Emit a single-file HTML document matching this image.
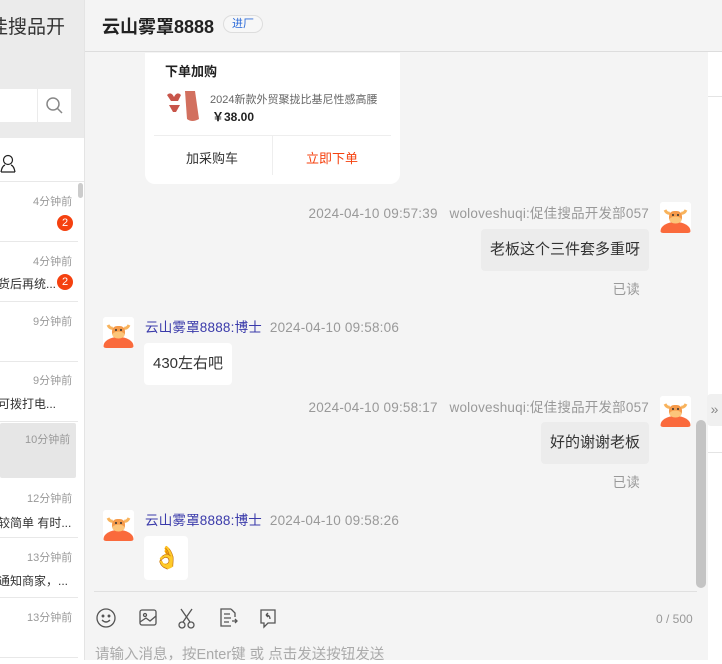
<!DOCTYPE html>
<html><head><meta charset="utf-8"><style>
*{margin:0;padding:0;box-sizing:border-box}
body{width:722px;height:660px;overflow:hidden;background:#fff;font-family:"Liberation Sans","Noto Sans CJK SC",sans-serif;position:relative}
.a{position:absolute}
.t{color:#999;font-size:11px}
.badge{position:absolute;width:16px;height:16px;border-radius:8px;background:#f5410f;color:#fff;font-size:11px;text-align:center;line-height:16px}
.row{position:absolute;left:0;width:78px;border-bottom:1px solid #e8e8e8}
.sm{font-size:12px;color:#333;white-space:nowrap}
.av{position:absolute;width:31px;height:31px;background:#fff;border-radius:3px;overflow:hidden}
.meta{position:absolute;font-size:13.5px;color:#999;white-space:nowrap;letter-spacing:0.2px}
.bub{position:absolute;background:#fff;border-radius:4px;font-size:15px;color:#333;line-height:42px;padding:0 9px;white-space:nowrap}
.me{background:#ececec}
</style></head><body>
<div class="a" style="left:0;top:0;width:84px;height:138px;background:#ebebeb"></div>
<div class="a" style="left:-11px;top:12px;font-size:19px;color:#333;white-space:nowrap">佳搜品开</div>
<div class="a" style="left:0;top:89px;width:37px;height:33px;background:#fff"></div>
<div class="a" style="left:38px;top:89px;width:33px;height:33px;background:#fff"></div>
<svg class="a" style="left:45px;top:96px" width="20" height="20"><circle cx="8" cy="8" r="6" fill="none" stroke="#888" stroke-width="1.5"/><line x1="12.5" y1="12.5" x2="17" y2="17" stroke="#888" stroke-width="1.5"/></svg>
<div class="a" style="left:0;top:138px;width:84px;height:522px;background:#fff"></div>
<svg class="a" style="left:0;top:153px" width="16" height="20"><circle cx="8" cy="7" r="4.5" fill="none" stroke="#222" stroke-width="1.2"/><path d="M1 19 Q2 13 5 12 M15 19 Q14 13 11 12 M1 19 H15" fill="none" stroke="#222" stroke-width="1.2"/></svg>
<div class="a" style="left:0;top:181px;width:84px;height:1px;background:#e8e8e8"></div>
<div class="a" style="left:78px;top:183px;width:5px;height:15px;background:#ccc;border-radius:3px"></div>
<div class="row" style="top:182px;height:60px"></div>
<div class="a t" style="left:33px;top:193px">4分钟前</div><div class="badge" style="left:57px;top:215px">2</div>
<div class="row" style="top:242px;height:60px"></div>
<div class="a t" style="left:33px;top:253px">4分钟前</div><div class="a sm" style="left:-2px;top:275px">货后再统...</div><div class="badge" style="left:57px;top:274px">2</div>
<div class="row" style="top:302px;height:60px"></div>
<div class="a t" style="left:33px;top:313px">9分钟前</div>
<div class="row" style="top:362px;height:60px"></div>
<div class="a t" style="left:33px;top:372px">9分钟前</div><div class="a sm" style="left:-2px;top:395px">可拨打电...</div>
<div class="a" style="left:0;top:423px;width:76px;height:55px;background:#e6e6e6;border-radius:2px"></div>
<div class="a t" style="left:25px;top:431px">10分钟前</div>
<div class="row" style="top:479px;height:59px"></div>
<div class="a t" style="left:27px;top:490px">12分钟前</div><div class="a sm" style="left:-2px;top:514px">较简单 有时...</div>
<div class="row" style="top:538px;height:60px"></div>
<div class="a t" style="left:27px;top:549px">13分钟前</div><div class="a sm" style="left:-2px;top:572px">通知商家，...</div>
<div class="row" style="top:598px;height:60px"></div>
<div class="a t" style="left:27px;top:609px">13分钟前</div>
<div class="a" style="left:84px;top:0;width:1px;height:660px;background:#e4e4e4"></div>
<div class="a" style="left:85px;top:0;width:623px;height:660px;background:#f4f4f4"></div>
<div class="a" style="left:85px;top:0;width:637px;height:52px;background:#f4f4f4;border-bottom:1px solid #ddd"></div>
<div class="a" style="left:102px;top:13px;font-size:18px;font-weight:bold;color:#222">云山雾罩8888</div>
<div class="a" style="left:223px;top:15px;width:40px;height:18px;border:1px solid #ddd;border-radius:9px;font-size:11px;color:#2c6bd9;text-align:center;line-height:16px;background:#f7f7f7">进厂</div>
<div class="a" style="left:708px;top:96px;width:14px;height:1px;background:#e4e4e4"></div>
<div class="a" style="left:708px;top:452px;width:14px;height:1px;background:#e4e4e4"></div>
<div class="a" style="left:145px;top:53px;width:255px;height:131px;background:#fff;border-radius:0 0 10px 10px"></div>
<div class="a" style="left:165px;top:61px;font-size:13px;font-weight:bold;color:#222">下单加购</div>
<svg class="a" style="left:165px;top:89px" width="36" height="35"><path d="M2 6 Q6 2 9 8 Q12 2 16 6 L13 12 L6 12Z" fill="#c8554a"/><path d="M4 16 H15 L11 23 H8Z" fill="#c8554a"/><path d="M20 2 H30 L34 30 Q27 34 22 30Z" fill="#d2705f"/></svg>
<div class="a" style="left:210px;top:91px;font-size:11px;color:#666;white-space:nowrap;width:170px;overflow:hidden">2024新款外贸聚拢比基尼性感高腰</div>
<div class="a" style="left:212px;top:108px;font-size:12px;font-weight:bold;color:#222">￥38.00</div>
<div class="a" style="left:154px;top:135px;width:237px;height:1px;background:#eee"></div>
<div class="a" style="left:272px;top:136px;width:1px;height:39px;background:#eee"></div>
<div class="a" style="left:186px;top:148px;font-size:13px;color:#333">加采购车</div>
<div class="a" style="left:306px;top:148px;font-size:13px;color:#f5410f">立即下单</div>
<div class="meta" style="right:73px;top:202px">2024-04-10 09:57:39&nbsp;&nbsp;&nbsp;woloveshuqi:促佳搜品开发部057</div>
<div class="bub me" style="right:73px;top:229px">老板这个三件套多重呀</div>
<div class="meta" style="right:82px;top:278px">已读</div>
<div class="meta" style="left:145px;top:316px"><span style="color:#3a3aaa">云山雾罩8888:博士</span>&nbsp;&nbsp;2024-04-10 09:58:06</div>
<div class="bub" style="left:144px;top:343px">430左右吧</div>
<div class="meta" style="right:73px;top:396px">2024-04-10 09:58:17&nbsp;&nbsp;&nbsp;woloveshuqi:促佳搜品开发部057</div>
<div class="bub me" style="right:73px;top:422px">好的谢谢老板</div>
<div class="meta" style="right:82px;top:471px">已读</div>
<div class="meta" style="left:145px;top:509px"><span style="color:#3a3aaa">云山雾罩8888:博士</span>&nbsp;&nbsp;2024-04-10 09:58:26</div>
<div class="a" style="left:144px;top:536px;width:44px;height:44px;background:#fff;border-radius:4px"></div>
<div class="a" style="left:153px;top:545px;font-size:22px;line-height:26px">👌</div>
<svg width="0" height="0" style="position:absolute"><defs><g id="cow"><rect width="31" height="31" fill="#fff"/><ellipse cx="15.5" cy="29" rx="15" ry="9" fill="#fa6a3c"/><path d="M5 8 Q7 12 10 11 M26 8 Q24 12 21 11" stroke="#f8b35c" stroke-width="3" fill="none"/><rect x="9" y="9" width="13" height="12" rx="5" fill="#f59a4a"/><ellipse cx="15.5" cy="18" rx="6" ry="3.5" fill="#fcc57a"/><circle cx="13" cy="13" r="1" fill="#333"/><circle cx="18" cy="13" r="1" fill="#333"/></g></defs></svg>
<svg class="av" style="left:660px;top:202px"><use href="#cow"/></svg>
<svg class="av" style="left:103px;top:317px"><use href="#cow"/></svg>
<svg class="av" style="left:660px;top:396px"><use href="#cow"/></svg>
<svg class="av" style="left:103px;top:510px"><use href="#cow"/></svg>
<div class="a" style="left:696px;top:420px;width:10px;height:168px;background:#c4c4c4;border-radius:5px"></div>
<div class="a" style="left:707px;top:394px;width:15px;height:32px;background:#f0f0f0;border-radius:4px 0 0 4px;color:#888;font-size:14px;line-height:30px;text-align:center">»</div>
<div class="a" style="left:94px;top:591px;width:603px;height:1px;background:#e0e0e0"></div>
<svg class="a" style="left:94px;top:606px" width="200" height="24" fill="none" stroke="#555" stroke-width="1.3">
<circle cx="12" cy="12" r="9"/><circle cx="9" cy="10" r="0.8" fill="#555"/><circle cx="15" cy="10" r="0.8" fill="#555"/><path d="M8 14 Q12 18 16 14"/>
<rect x="46" y="4" width="16" height="15" rx="2"/><circle cx="51" cy="9" r="1.5"/><path d="M46 16 L52 12 L56 15 L62 10"/>
<circle cx="88" cy="19" r="3"/><circle cx="97" cy="19" r="3"/><path d="M89 16 L98 3 M96 16 L87 3"/>
<path d="M137 3 H127 V20 H137 M137 3 L141 7 V11 M130 8 H136 M130 12 H137 M130 16 H135 M138 15 H143 M141 13 L143 15 L141 17"/>
<path d="M167 4 H181 V17 H174 L170 21 V17 H167Z M176 13 Q176 9 172 9 M172 9 L174 7 M172 9 L174 11"/>
</svg>
<div class="a" style="left:656px;top:612px;font-size:12px;color:#999">0 / 500</div>
<div class="a" style="left:95px;top:643px;font-size:14.5px;color:#aaa;white-space:nowrap">请输入消息，按Enter键 或 点击发送按钮发送</div>
</body></html>
